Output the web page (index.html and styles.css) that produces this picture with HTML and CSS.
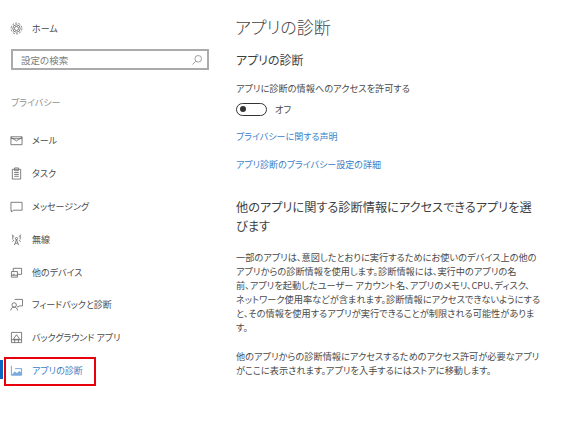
FILE: index.html
```html
<!DOCTYPE html>
<html lang="ja">
<head>
<meta charset="utf-8">
<title>アプリの診断</title>
<link rel="stylesheet" href="styles.css">
</head>
<body>
<div class="page">
  <aside class="side">
    <div class="home"><svg class="ic" viewBox="0 0 14 14"><circle cx="7" cy="7" r="2.2"/><circle cx="7" cy="7" r="4"/><circle cx="7" cy="7" r="5.8" stroke-dasharray="2.2 1.4"/></svg><span>ホーム</span></div>
    <div class="search"><span>設定の検索</span><svg class="mag" viewBox="0 0 12 12"><circle cx="7.2" cy="4.8" r="3.3"/><path d="M4.8 7.2 1.5 10.5"/></svg></div>
    <div class="group">プライバシー</div>
    <nav class="nav">
      <div class="item"><svg class="ic" viewBox="0 0 14 14"><path d="M1 3h12v8.500H1z"/><path d="M1 5h12M1 3.500 7 7.500l6-4"/></svg><span>メール</span></div>
      <div class="item"><svg class="ic" viewBox="0 0 14 14"><path d="M2.500 2.500h9v10.500h-9z"/><path d="M5 1h4v3H5zM4.500 6h5M4.500 8h5M4.500 10h5"/></svg><span>タスク</span></div>
      <div class="item"><svg class="ic" viewBox="0 0 14 14"><path d="M1 2.500h12v8.500H3.500L1.500 13v-2H1z"/></svg><span>メッセージング</span></div>
      <div class="item"><svg class="ic" viewBox="0 0 14 14"><path d="M4.800 13 7 7l2.200 6M5.600 11h2.800"/><circle cx="7" cy="6" r="1.200"/><path d="M4.500 4 2 1.800M9.500 4 12 1.800M4.500 7.500 2.500 9.500M9.500 7.500l2 2M3 3v4M11 3v4"/></svg><span>無線</span></div>
      <div class="item"><svg class="ic" viewBox="0 0 14 14"><path d="M3.500 6V2.500h9v6.500H8"/><path d="M1.500 6H8v6H1.500zM1.500 10H8M5 9H3"/></svg><span>他のデバイス</span></div>
      <div class="item"><svg class="ic" viewBox="0 0 14 14"><path d="M5 1.500h8.500v7H10L8.500 10V8.500"/><circle cx="4.500" cy="7.500" r="2.400"/><path d="M.8 13.500c.3-2.400 1.700-3.600 3.700-3.600s3.400 1.200 3.700 3.600"/></svg><span>フィードバックと診断</span></div>
      <div class="item"><svg class="ic" viewBox="0 0 14 14"><path d="M1.500 1.500h11v11h-11z"/><path d="M3.500 9 7 4l3.500 5zM1.500 9.500h11M5 12.500v-3M9 12.500v-3"/></svg><span>バックグラウンド アプリ</span></div>
      <div class="item current"><svg class="ic" viewBox="0 0 14 14"><path d="M1.500 2v10h11V5H5.500"/><path class="fill" d="M1.500 12 5 8l2.500 1.800L10 7.500l2.500 2V12z"/></svg><span>アプリの診断</span></div>
    </nav>
  </aside>
  <main class="main">
    <h1>アプリの診断</h1>
    <h2 class="first">アプリの診断</h2>
    <p class="allow">アプリに診断の情報へのアクセスを許可する</p>
    <div class="toggle"><span class="switch"><i></i></span><span>オフ</span></div>
    <a class="link">プライバシーに関する声明</a>
    <a class="link">アプリ診断のプライバシー設定の詳細</a>
    <h2 class="second">他のアプリに関する診断情報にアクセスできるアプリを選<br>びます</h2>
    <p class="body">一部のアプリは、意図したとおりに実行するためにお使いのデバイス上の他の<br>アプリからの診断情報を使用します。診断情報には、実行中のアプリの名<br>前、アプリを起動したユーザー アカウント名、アプリのメモリ、CPU、ディスク、<br>ネットワーク使用率などが含まれます。診断情報にアクセスできないようにする<br>と、その情報を使用するアプリが実行できることが制限される可能性がありま<br>す。</p>
    <p class="body">他のアプリからの診断情報にアクセスするためのアクセス許可が必要なアプリ<br>がここに表示されます。アプリを入手するにはストアに移動します。</p>
  </main>
</div>
</body>
</html>
```
FILE: styles.css
```css
*, *::before, *::after { box-sizing: border-box; }
html, body { margin: 0; height: 100%; background: #fff; }
body { font-family: "Noto Sans CJK JP", "Noto Sans", sans-serif; font-feature-settings: "palt"; color: #4a4a4a; overflow: hidden; }
.page { display: flex; width: 586px; height: 445px; }
.side { width: 235px; flex: none; padding: 18px 0 0 0; }
.home { display: flex; align-items: center; height: 20px; padding-left: 10px; font-size: 9px; gap: 9px; }
.ic { width: 13px; height: 13px; flex: none; fill: none; stroke: #666; stroke-width: .9; }
.search { display: flex; align-items: center; justify-content: space-between; margin: 11px 0 0 11px; width: 198px; height: 21px; border: 2px solid #ababab; padding: 0 2px 0 8px; font-size: 9.500px; color: #808080; }
.mag { width: 12px; height: 12px; fill: none; stroke: #888; stroke-width: .8; margin-right: 2px; }
.group { margin: 26px 0 0 11px; font-size: 9px; color: #8f8f8f; line-height: 14px; }
.nav { margin-top: 14px; }
.item { display: flex; align-items: center; height: 32.900px; padding-left: 10px; gap: 9px; font-size: 9px; color: #4a4a4a; position: relative; }
.current { color: #3a80c8; }
.current .ic { stroke: #5b96d2; }
.current .fill { fill: #7aabdc; stroke: none; }
.current::before { content: ""; position: absolute; left: 0; top: 6px; width: 3px; height: 19px; background: #0a64c0; }
.current::after { content: ""; position: absolute; left: 4px; top: 3px; width: 92px; height: 29px; border: 2px solid #e8000d; }
.main { flex: 1; padding: 13px 0 0 1px; min-width: 0; }
h1 { margin: 0 0 0 -1px; font-weight: 300; font-size: 17px; line-height: 28px; color: #444; }
h2 { margin: 0; font-weight: 400; color: #3f3f3f; }
.first { font-size: 12px; line-height: 18px; margin-top: 10px; }
.allow { margin: 12px 0 0; font-size: 9.200px; line-height: 15px; }
.toggle { display: flex; align-items: center; gap: 8px; font-size: 9.200px; height: 14px; margin-top: 6px; }
.switch { width: 31px; height: 13px; border: 1.500px solid #333; border-radius: 7px; display: flex; align-items: center; padding-left: 3px; }
.switch i { width: 6px; height: 6px; border-radius: 50%; background: #333; }
.link { display: block; font-size: 9px; line-height: 15px; color: #3a80c8; margin-top: 13px; }
.second { font-size: 12.200px; line-height: 19px; width: 310px; margin-top: 26px; white-space: nowrap; }
.body { margin: 14px 0 0; width: 320px; font-size: 9.200px; line-height: 14px; color: #4a4a4a; white-space: nowrap; }
.body + .body { margin-top: 15px; }
```
